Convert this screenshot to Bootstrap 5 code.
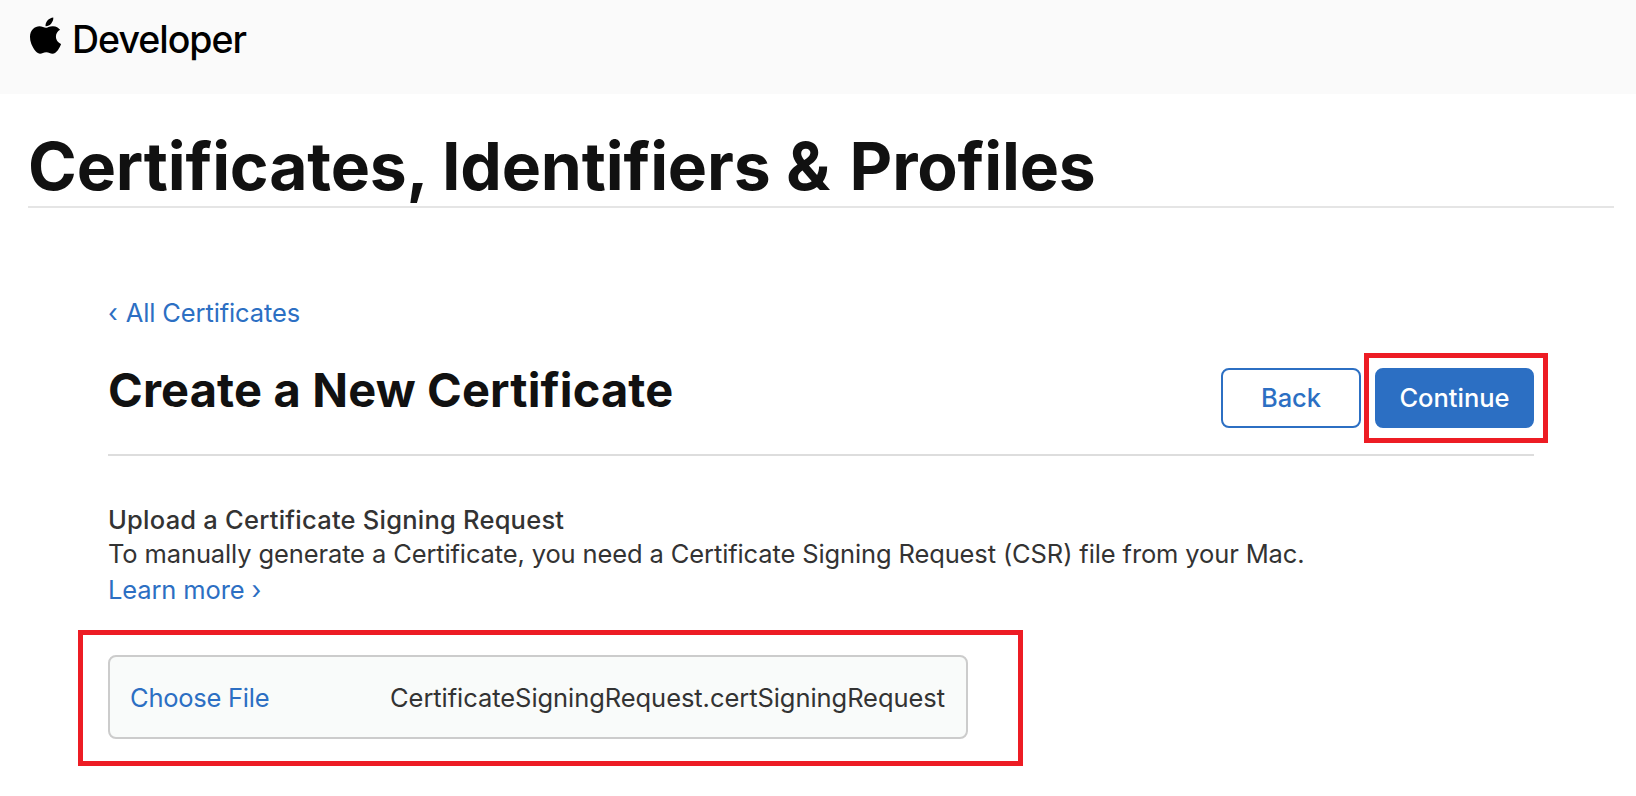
<!DOCTYPE html>
<html lang="en">
<head>
<meta charset="utf-8">
<title>Certificates, Identifiers &amp; Profiles</title>
<link href="https://cdn.jsdelivr.net/npm/bootstrap@5.3.0/dist/css/bootstrap.min.css" rel="stylesheet">
<style>
body{font-family:Inter,"Liberation Sans",sans-serif;font-size:25.5px;line-height:34px;letter-spacing:-.125px;color:#333;background:#fff;overflow:hidden}
a{color:#2c6fc3;text-decoration:none}
.site-bar{height:94px;background:#fafafa;padding:17px 0 0 30px}
.site-bar svg{width:31px;height:37px}
.brand-word{font-size:37.5px;line-height:46px;font-weight:500;letter-spacing:-1px;color:#000;margin-left:11px}
.page-title{margin:32px 22px 0 28px;border-bottom:2px solid #e5e5e5}
.page-title h1{font-size:66px;line-height:80px;font-weight:700;letter-spacing:-.17px;color:#111;margin:0}
.amp{margin-right:4px}
.main-area{margin:87px 102px 0 108px}
.back-link{line-height:36px}
.back-link .chev{margin-right:1px}
.section-head{margin-top:31px;height:94px;border-bottom:2px solid #ddd}
.section-head h2{font-size:47px;line-height:56px;font-weight:700;letter-spacing:.15px;color:#111;margin:0}
.actions{margin-top:6px;gap:14px}
.btn-action{height:60px;border:2px solid #2c6fc3;border-radius:8px;font-size:25.5px;font-weight:500;letter-spacing:0;padding:0;color:#2c6fc3}
.btn-back{width:140px}
.btn-go{width:159px;background:#2c6fc3;color:#fff}
.go-frame{inset:-15px -14px -15px -11px;border:5px solid #ed1c24}
.upload{margin-top:47px}
.upload-title{font-weight:550;letter-spacing:.23px}
.more-link{margin-top:2px}
.file-frame{width:945px;height:136px;margin:23px 0 0 -30px;border:5px solid #ed1c24;padding:20px 50px 0 25px}
.file-box{height:84px;border:2px solid #ccc;border-radius:8px;background:#f9fbfa;padding:2px 21px 0 20px}
.file-name{letter-spacing:-.06px}
.pick{letter-spacing:-.25px}
</style>
</head>
<body>
<header class="site-bar d-flex align-items-start">
<svg viewBox="4 0 376 458" preserveAspectRatio="none" aria-hidden="true"><path d="M318.700 243.200c-.2-36.700 16.400-64.400 50-84.800-18.800-26.900-47.200-41.700-84.700-44.600-35.500-2.800-74.300 20.700-88.500 20.700-15 0-49.400-19.700-76.400-19.700C63.300 115.700 4 159.300 4 248c0 26.200 4.800 53.300 14.400 81.200 12.800 36.700 59 126.700 107.200 125.200 25.200-.6 43-17.900 75.800-17.900 31.800 0 48.300 17.900 76.400 17.900 48.600-.7 90.400-82.500 102.600-119.300-65.200-30.700-61.700-90-61.700-91.900zM262.100 79c27.300-32.400 24.800-61.900 24-72.500-24.100 1.400-52 16.400-67.900 34.900-17.500 19.800-27.800 44.300-25.600 71.900 26.100 2 49.900-11.400 69.500-34.300z"/></svg>
<span class="brand-word">Developer</span>
</header>
<div class="page-title"><h1>Certificates, Identifiers <span class="amp">&amp;</span> Profiles</h1></div>
<main class="main-area">
<a href="#" class="back-link d-block"><span class="chev">‹</span> All Certificates</a>
<div class="section-head d-flex justify-content-between align-items-start">
<h2>Create a New Certificate</h2>
<div class="actions d-flex">
<button class="btn btn-action btn-back">Back</button>
<div class="position-relative"><button class="btn btn-action btn-go">Continue</button><div class="go-frame position-absolute"></div></div>
</div>
</div>
<section class="upload">
<div class="upload-title">Upload a Certificate Signing Request</div>
<div>To manually generate a Certificate, you need a Certificate Signing Request (CSR) file from your Mac.</div>
<a href="#" class="more-link d-block">Learn more ›</a>
<div class="file-frame"><div class="file-box d-flex align-items-center justify-content-between"><a href="#" class="pick">Choose File</a><span class="file-name">CertificateSigningRequest.certSigningRequest</span></div></div>
</section>
</main>
<script src="https://cdn.jsdelivr.net/npm/bootstrap@5.3.0/dist/js/bootstrap.bundle.min.js"></script>
</body>
</html>
